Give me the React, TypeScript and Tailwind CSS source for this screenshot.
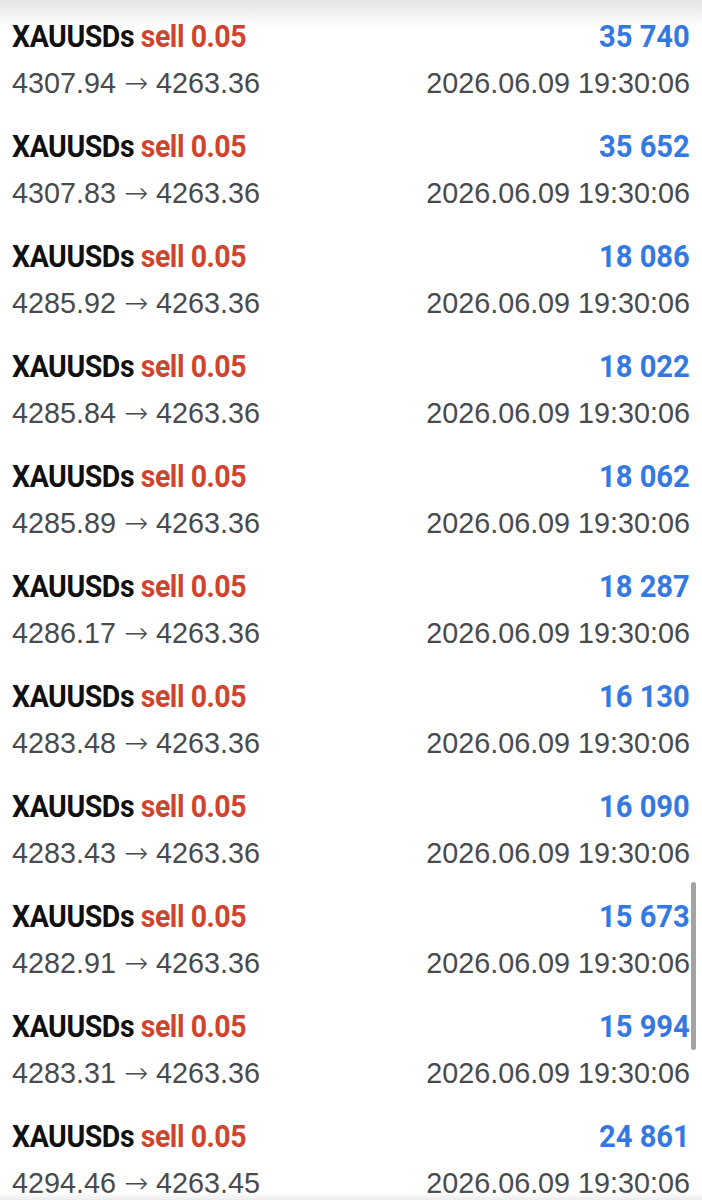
import React from 'react';

type Trade = { profit: string; open: string; close: string };

const trades: Trade[] = [
  { profit: '35 740', open: '4307.94', close: '4263.36' },
  { profit: '35 652', open: '4307.83', close: '4263.36' },
  { profit: '18 086', open: '4285.92', close: '4263.36' },
  { profit: '18 022', open: '4285.84', close: '4263.36' },
  { profit: '18 062', open: '4285.89', close: '4263.36' },
  { profit: '18 287', open: '4286.17', close: '4263.36' },
  { profit: '16 130', open: '4283.48', close: '4263.36' },
  { profit: '16 090', open: '4283.43', close: '4263.36' },
  { profit: '15 673', open: '4282.91', close: '4263.36' },
  { profit: '15 994', open: '4283.31', close: '4263.36' },
  { profit: '24 861', open: '4294.46', close: '4263.45' },
];

const TradeRow = ({ trade }: { trade: Trade }) => (
  <div className="h-[110px] pt-[13px] pl-[12px] pr-[12px]">
    <div className="flex justify-between items-baseline h-[46px] leading-[46px] font-['Roboto',sans-serif] font-bold text-[32px]">
      <span className="inline-block origin-left scale-x-[0.89] whitespace-nowrap tracking-[-0.5px]">
        <span className="text-[#111111]">XAUUSDs</span>{' '}
        <span className="text-[#d0432f]">sell 0.05</span>
      </span>
      <span className="inline-block origin-right scale-x-[0.91] text-[#3479e2] whitespace-nowrap">
        {trade.profit}
      </span>
    </div>
    <div className="flex justify-between h-[48px] leading-[48px] font-['Liberation_Sans',sans-serif] text-[28.75px] text-[#4a4a4a]">
      <span>
        {trade.open} <span className="font-['DejaVu_Sans',sans-serif] font-light">→</span> {trade.close}
      </span>
      <span>2026.06.09 19:30:06</span>
    </div>
  </div>
);

const App = () => {
  return (
    <div className="relative w-[702px] h-[1200px] overflow-hidden bg-white">
      <div className="absolute top-0 left-0 right-0 h-[28px] bg-gradient-to-b from-[#e4e4e4] to-white/0" />
      <div className="relative">
        {trades.map((t, i) => (
          <TradeRow key={i} trade={t} />
        ))}
      </div>
      <div className="absolute bottom-0 left-0 right-0 h-[8px] bg-gradient-to-t from-[#ececec] to-white/0" />
      <div className="absolute left-[691px] top-[882px] w-[5px] h-[168px] rounded-full bg-[#a3a3a3]" />
    </div>
  );
};

export default App;
